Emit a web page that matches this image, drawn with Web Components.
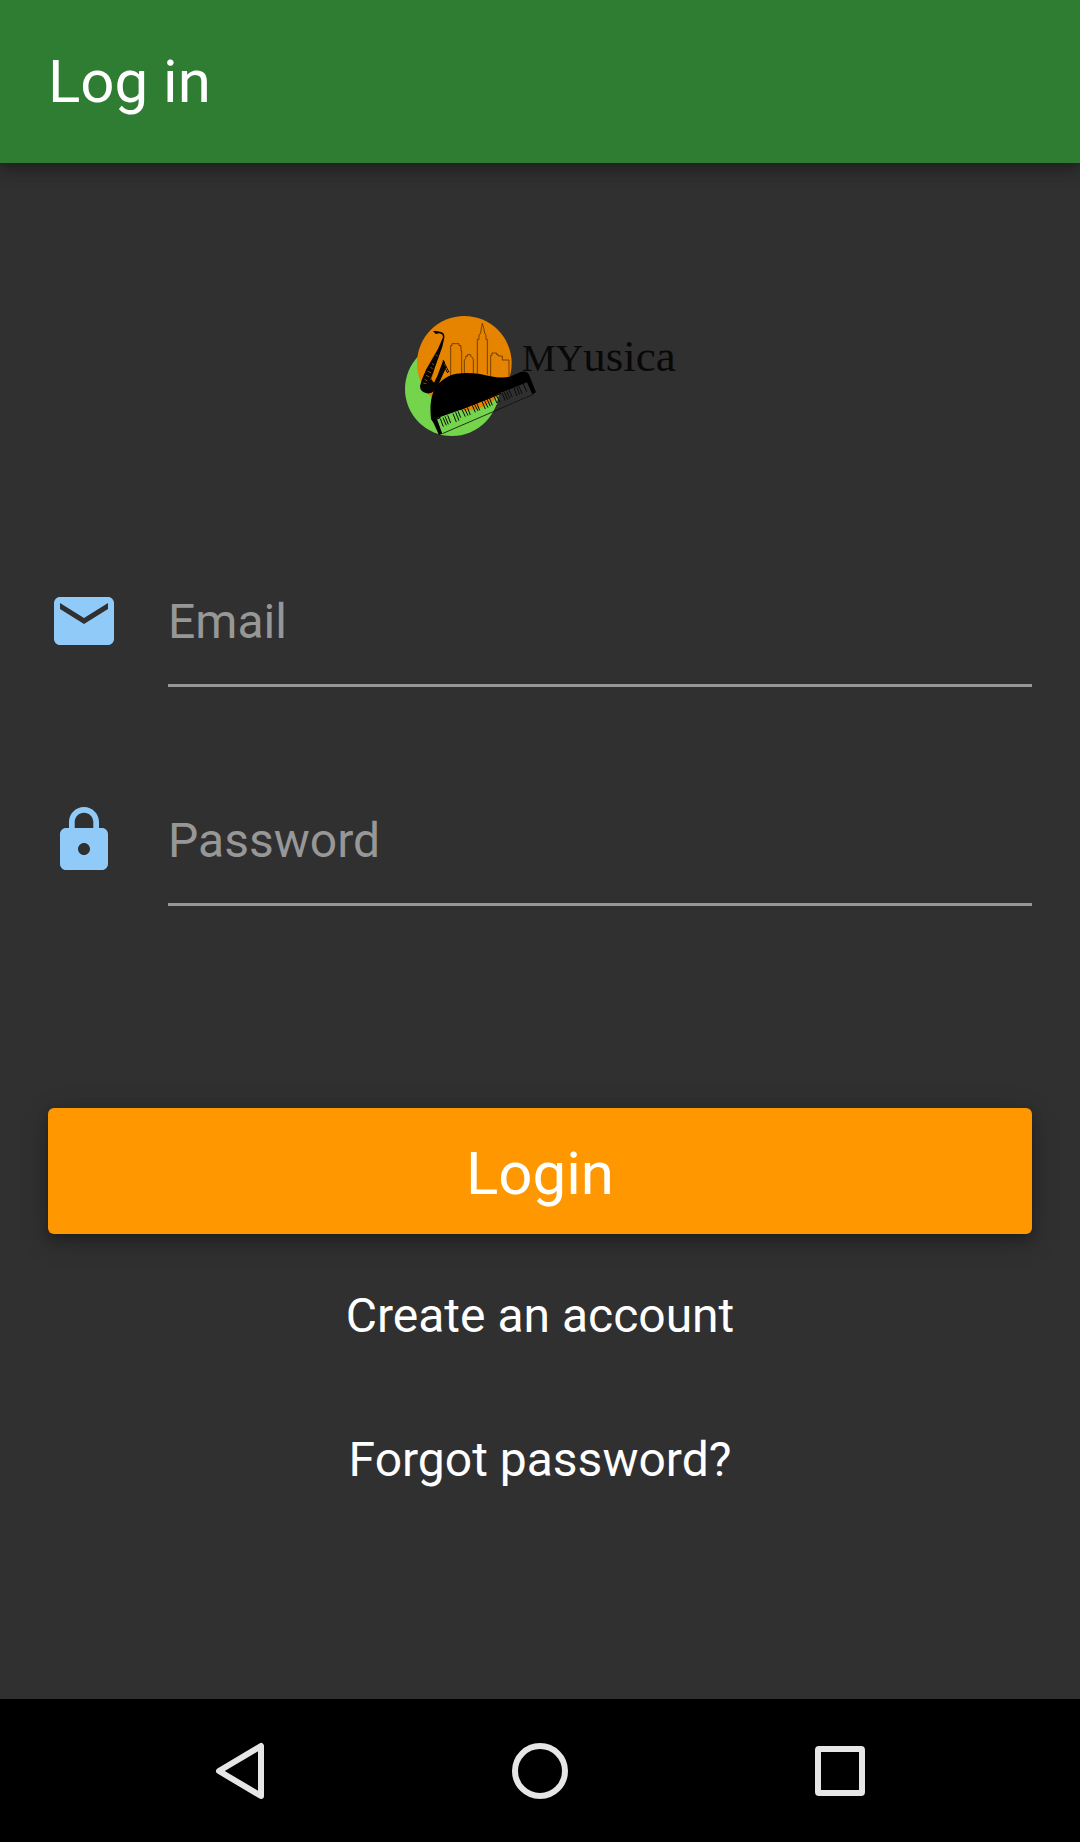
<!DOCTYPE html>
<html lang="en">
<head>
<meta charset="utf-8">
<meta name="viewport" content="width=device-width, initial-scale=1">
<title>Log in</title>
<style>
  body { margin: 0; background: #303030; color: #fff; font-family: Roboto, "Noto Sans", sans-serif; }
</style>
</head>
<body>
<login-screen></login-screen>
<script>
const define = (name, html, setup) => customElements.define(name, class extends HTMLElement {
  constructor() {
    super();
    const t = document.createElement('template');
    t.innerHTML = html;
    this.attachShadow({ mode: 'open' }).append(t.content.cloneNode(true));
  }
  connectedCallback() { if (setup) setup(this, this.shadowRoot); }
});

define('app-bar', `
<style>
  :host { display: block; background: #2e7d32; box-shadow: 0 6px 12px rgba(0,0,0,.28), 0 3px 24px rgba(0,0,0,.14); }
  header { padding: 47px 48px 46px; }
  h1 { margin: 0; font-size: 60px; line-height: 70px; font-weight: 400; }
</style>
<header><h1><slot></slot></h1></header>`);

define('brand-logo', `
<style>
  :host { display: flex; justify-content: center; }
  svg { display: block; width: 270px; height: 124px; overflow: visible; }
  text { font-family: "Liberation Serif", serif; fill: #080808; }
</style>
<svg viewBox="45 45 810 372" role="img" aria-label="Myusica">
  <circle cx="186" cy="267" r="141" fill="#74d44c"/>
  <circle cx="223" cy="190" r="142" fill="#e68400"/>
  <!-- piano keyboard gap showing the dark backdrop right of the discs -->
  <path d="M364 262 L408 246 L424 280 L330 316Z" fill="#303030"/>
  <path d="M138 358 L210 330 L245 337 L314 309 L323 309 L305 337 L152 400Z" fill="#74d44c"/>
  <!-- skyline -->
  <path d="M182 228V137H186V131H207V137H213V153H215V224M223 221V179L227 176V169H232V164H242V169L248 173L250 180V221M262 221V118H267V105L272 99L274 84L277 70L281 84L284 99L288 106V118H292V223M302 228V166H306V159H320V164H325V168H337V180H357V228" fill="none" stroke="#5c3500" stroke-width="2.5"/>
  <!-- saxophone -->
  <path d="M129 93 L139 93 L153 96 Q165 100 163 113 L157 140 L134 205 L124 238 L132 248 L142 228 L151 204 L160 180 L165 187 L163 194 L169 202 L158 225 L146 252 Q136 283 110 280 Q90 275 90 258 L96 238 L108 209 L144 146 L159 112 Q159 102 148 100 L137 102Z" fill="#060402"/>
  <path d="M159 181L177 217M166 206L173 219" stroke="#060402" stroke-width="3" fill="none"/>
  <path d="M108 226L118 231M113 214L123 218M104 238L112 243M121 202L128 206M126 191L132 194M137 165L143 168M122 239L130 220M100 249L109 251" stroke="#c87500" stroke-width="2" fill="none"/>
  <!-- lid and body of the grand piano -->
  <path d="M123 357 Q118 307 129 279 Q148 232 199 221 Q248 214 302 229 Q340 237 365 228 L391 216 Q410 211 417 224 L438 277 L427 283 L411 247 L333 278 L202 333 L140 355 L157 401 L147 405 L131 370Z" fill="#000"/>
  <path d="M157 401L430 283" stroke="#111" stroke-width="2.5"/>
  <!-- black keys -->
  <path d="M151 356L160 380M159 353L169 376M165 349L175 373M173 346L182 369M189 341L199 366M197 337L207 362M204 334L212 353M216 329L226 350M224 326L234 347M232 322L241 345M247 316L256 337M253 312L264 333M260 309L269 331M276 304L286 327M283 300L294 323M291 297L301 319M298 294L307 316M313 291L321 310M320 288L330 307M336 279L346 302M343 277L353 299M350 274L360 296M357 270L367 292M372 264L381 288M380 261L389 284M386 258L396 281M400 252L410 275" fill="none" stroke="#090b08" stroke-width="3"/>
  <path d="M141 357L151 352M209 329L333 280" stroke="#000" stroke-width="4"/>
  <text x="396" y="213" font-size="114">MY<tspan font-size="135">usica</tspan></text>
</svg>`);

define('icon-field', `
<style>
  :host { display: block; }
  .row { display: flex; align-items: center; gap: 48px; }
  label { flex: none; }
  svg { display: block; width: 72px; height: 72px; fill: #90caf9; }
  input { flex: 1; min-width: 0; box-sizing: border-box; height: 132px; margin: 0; padding: 3px 0 0;
    border: 0; border-bottom: 3px solid #979797; border-radius: 0; outline: 0; background: none;
    color: #fff; font: 400 48px Roboto, "Noto Sans", sans-serif; }
  input::placeholder { color: #979797; opacity: 1; }
</style>
<div class="row">
  <label for="control"><svg viewBox="0 0 24 24" aria-hidden="true"><path/></svg></label>
  <input id="control">
</div>`, (host, root) => {
  const input = root.querySelector('input');
  const name = host.getAttribute('label');
  input.type = host.getAttribute('type');
  input.placeholder = name;
  input.setAttribute('aria-label', name);
  root.querySelector('path').setAttribute('d', {
    email: 'M20 4H4c-1.1 0-1.99.9-1.99 2L2 18c0 1.1.9 2 2 2h16c1.1 0 2-.9 2-2V6c0-1.1-.9-2-2-2zm0 4l-8 5-8-5V6l8 5 8-5v2z',
    password: 'M18 8h-1V6c0-2.76-2.24-5-5-5S7 3.24 7 6v2H6c-1.1 0-2 .9-2 2v10c0 1.1.9 2 2 2h12c1.1 0 2-.9 2-2V10c0-1.1-.9-2-2-2zm-6 9c-1.1 0-2-.9-2-2s.9-2 2-2 2 .9 2 2-.9 2-2 2zm3.1-9H8.9V6c0-1.71 1.39-3.1 3.1-3.1 1.71 0 3.1 1.39 3.1 3.1v2z'
  }[input.type]);
});

define('raised-button', `
<style>
  :host { display: block; }
  button { display: block; width: 100%; height: 126px; margin: 0; padding: 5px 48px 0; border: 0; border-radius: 6px;
    background: #ff9800; color: #fff; font: 400 60px/70px Roboto, "Noto Sans", sans-serif;
    box-shadow: 0 6px 12px rgba(0,0,0,.25), 0 6px 30px rgba(0,0,0,.18); }
</style>
<button type="button"><slot></slot></button>`);

define('flat-button', `
<style>
  :host { display: block; }
  button { display: block; width: 100%; height: 144px; margin: 0; padding: 0; border: 0; background: none;
    color: #fff; font: 400 48px/56px Roboto, "Noto Sans", sans-serif; }
</style>
<button type="button"><slot></slot></button>`);

define('system-nav', `
<style>
  :host { display: block; background: #000; }
  nav { display: grid; grid-template-columns: repeat(3, 1fr); padding: 0 8.3333%; }
  button { display: flex; justify-content: center; align-items: center; height: 143px; margin: 0; padding: 0; border: 0; background: none; }
  svg { display: block; width: 72px; height: 72px; fill: none; stroke: #e6e6e6; stroke-width: 6; stroke-linejoin: round; }
</style>
<nav aria-label="System">
  <button type="button" aria-label="Back"><svg viewBox="0 0 72 72"><path d="M57 11V61L15 36Z"/></svg></button>
  <button type="button" aria-label="Home"><svg viewBox="0 0 72 72"><circle cx="36" cy="36" r="25"/></svg></button>
  <button type="button" aria-label="Recent apps"><svg viewBox="0 0 72 72"><rect x="14" y="14" width="44" height="44" rx="1"/></svg></button>
</nav>`);

define('login-screen', `
<style>
  :host { display: flex; flex-direction: column; min-height: 100vh; }
  main { flex: 1; padding: 152px 48px 48px; }
  .fields { display: grid; gap: 87px; margin: 116px 0 202px; }
  .links { margin-top: 10px; }
</style>
<app-bar>Log in</app-bar>
<main>
  <brand-logo></brand-logo>
  <div class="fields">
    <icon-field type="email" label="Email"></icon-field>
    <icon-field type="password" label="Password"></icon-field>
  </div>
  <raised-button>Login</raised-button>
  <div class="links">
    <flat-button>Create an account</flat-button>
    <flat-button>Forgot password?</flat-button>
  </div>
</main>
<system-nav></system-nav>`);
</script>
</body>
</html>
